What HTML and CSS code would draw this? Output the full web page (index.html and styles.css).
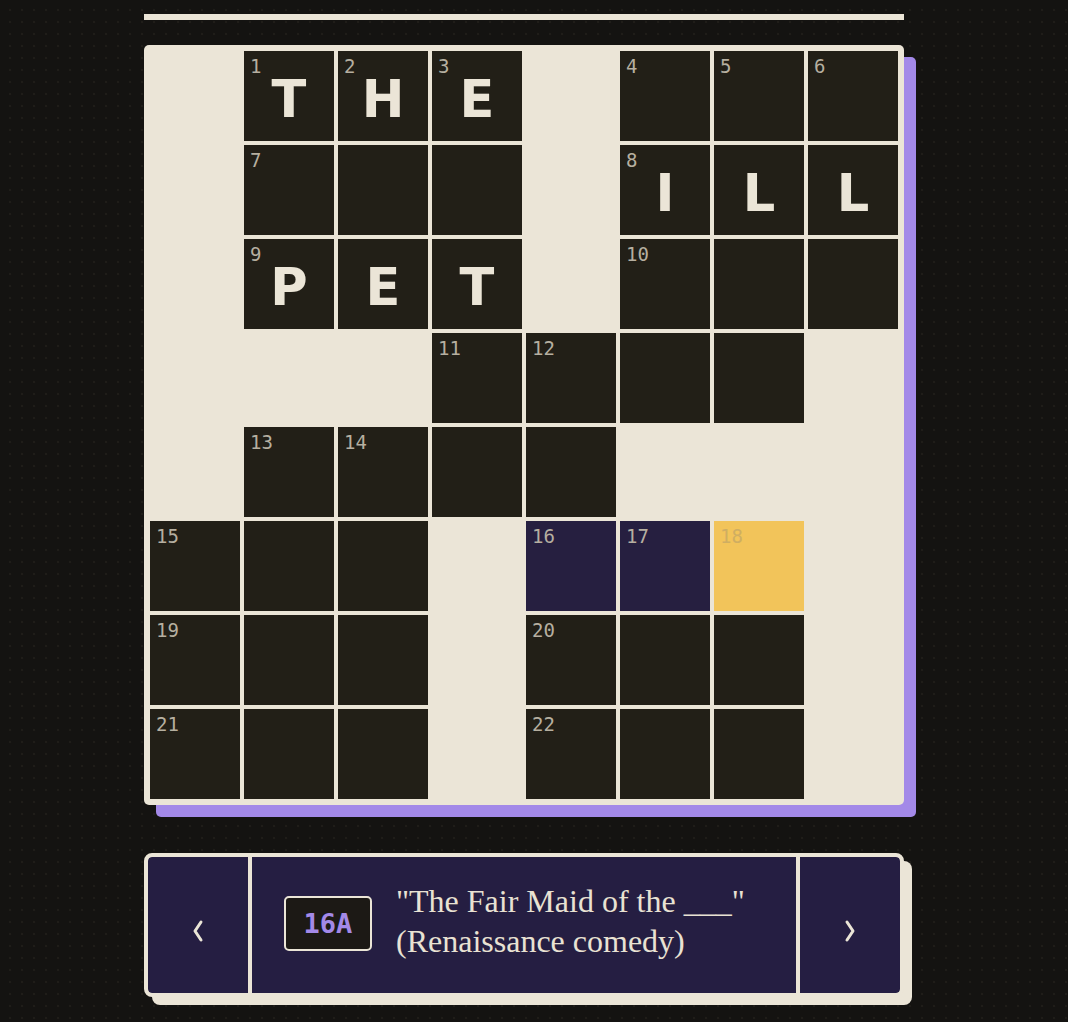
FILE: index.html
```html
<!DOCTYPE html>
<html lang="en">
<head>
<meta charset="utf-8">
<title>Crossword</title>
<link rel="stylesheet" href="styles.css">
</head>
<body>
<main class="page">
  <div class="rule"></div>

  <section class="board">
    <!-- row 0 -->
    <div class="sq empty"></div>
    <div class="sq"><span class="num">1</span><span class="ltr">T</span></div>
    <div class="sq"><span class="num">2</span><span class="ltr">H</span></div>
    <div class="sq"><span class="num">3</span><span class="ltr">E</span></div>
    <div class="sq empty"></div>
    <div class="sq"><span class="num">4</span></div>
    <div class="sq"><span class="num">5</span></div>
    <div class="sq"><span class="num">6</span></div>
    <!-- row 1 -->
    <div class="sq empty"></div>
    <div class="sq"><span class="num">7</span></div>
    <div class="sq"></div>
    <div class="sq"></div>
    <div class="sq empty"></div>
    <div class="sq"><span class="num">8</span><span class="ltr">I</span></div>
    <div class="sq"><span class="ltr">L</span></div>
    <div class="sq"><span class="ltr">L</span></div>
    <!-- row 2 -->
    <div class="sq empty"></div>
    <div class="sq"><span class="num">9</span><span class="ltr">P</span></div>
    <div class="sq"><span class="ltr">E</span></div>
    <div class="sq"><span class="ltr">T</span></div>
    <div class="sq empty"></div>
    <div class="sq"><span class="num">10</span></div>
    <div class="sq"></div>
    <div class="sq"></div>
    <!-- row 3 -->
    <div class="sq empty"></div>
    <div class="sq empty"></div>
    <div class="sq empty"></div>
    <div class="sq"><span class="num">11</span></div>
    <div class="sq"><span class="num">12</span></div>
    <div class="sq"></div>
    <div class="sq"></div>
    <div class="sq empty"></div>
    <!-- row 4 -->
    <div class="sq empty"></div>
    <div class="sq"><span class="num">13</span></div>
    <div class="sq"><span class="num">14</span></div>
    <div class="sq"></div>
    <div class="sq"></div>
    <div class="sq empty"></div>
    <div class="sq empty"></div>
    <div class="sq empty"></div>
    <!-- row 5 -->
    <div class="sq"><span class="num">15</span></div>
    <div class="sq"></div>
    <div class="sq"></div>
    <div class="sq empty"></div>
    <div class="sq word"><span class="num">16</span></div>
    <div class="sq word"><span class="num">17</span></div>
    <div class="sq active"><span class="num">18</span></div>
    <div class="sq empty"></div>
    <!-- row 6 -->
    <div class="sq"><span class="num">19</span></div>
    <div class="sq"></div>
    <div class="sq"></div>
    <div class="sq empty"></div>
    <div class="sq"><span class="num">20</span></div>
    <div class="sq"></div>
    <div class="sq"></div>
    <div class="sq empty"></div>
    <!-- row 7 -->
    <div class="sq"><span class="num">21</span></div>
    <div class="sq"></div>
    <div class="sq"></div>
    <div class="sq empty"></div>
    <div class="sq"><span class="num">22</span></div>
    <div class="sq"></div>
    <div class="sq"></div>
    <div class="sq empty"></div>
  </section>

  <section class="cluebar">
    <button class="nav" aria-label="Previous clue">
      <svg width="14" height="24" viewBox="0 0 14 24"><path d="M10 3 L4 12 L10 21" fill="none" stroke="#ebe5d7" stroke-width="3" stroke-linecap="round" stroke-linejoin="round"/></svg>
    </button>
    <div class="clue">
      <span class="badge">16A</span>
      <p class="clue-text">"The Fair Maid of the ___"<br>(Renaissance comedy)</p>
    </div>
    <button class="nav" aria-label="Next clue">
      <svg width="14" height="24" viewBox="0 0 14 24"><path d="M4 3 L10 12 L4 21" fill="none" stroke="#ebe5d7" stroke-width="3" stroke-linecap="round" stroke-linejoin="round"/></svg>
    </button>
  </section>
</main>
</body>
</html>
```

FILE: styles.css
```css
html, body {
  margin: 0;
  padding: 0;
}

body {
  background-color: #141311;
  background-image: radial-gradient(circle, #1f1d19 1.2px, transparent 1.6px);
  background-size: 12px 12px;
  background-position: 4px 4px;
  min-height: 1022px;
  font-family: "Inter", "DejaVu Sans", sans-serif;
}

.page {
  width: 760px;
  padding: 14px 0 0 144px;
  display: flex;
  flex-direction: column;
}

.rule {
  height: 6px;
  background: #ebe5d7;
}

.board {
  margin-top: 25px;
  display: grid;
  grid-template-columns: repeat(8, 90px);
  grid-auto-rows: 90px;
  gap: 4px;
  padding: 6px;
  background: #ebe5d7;
  border-radius: 5px;
  box-shadow: 12px 12px 0 #a389e8;
}

.sq {
  position: relative;
  background: #221f17;
  display: flex;
  align-items: center;
  justify-content: center;
}

.sq.empty {
  background: transparent;
}

.sq.word {
  background: #261f40;
}

.sq.active {
  background: #f2c45a;
}

.num {
  position: absolute;
  top: 4px;
  left: 6px;
  font-family: "DejaVu Sans Mono", monospace;
  font-size: 19px;
  line-height: 22px;
  color: #b6afa0;
}

.active .num {
  color: #cfae62;
}

.ltr {
  font-family: "DejaVu Sans", sans-serif;
  font-weight: 700;
  font-size: 51px;
  line-height: 1;
  color: #ebe5d7;
  padding-top: 6px;
}

.cluebar {
  margin-top: 48px;
  display: grid;
  grid-template-columns: 100px 1fr 100px;
  gap: 4px;
  height: 136px;
  border: 4px solid #ebe5d7;
  background: #ebe5d7;
  border-radius: 8px;
  box-shadow: 8px 8px 0 #ebe5d7;
  overflow: hidden;
}

.nav {
  margin: 0;
  padding: 12px 0 0;
  border: 0;
  background: #251e42;
  display: flex;
  align-items: center;
  justify-content: center;
  cursor: pointer;
}

.nav:first-child {
  border-radius: 4px 0 0 4px;
}

.nav:last-child {
  border-radius: 0 4px 4px 0;
}

.clue {
  background: #251e42;
  display: flex;
  align-items: center;
  gap: 24px;
  padding-left: 32px;
}

.badge {
  width: 84px;
  height: 51px;
  border: 2px solid #ebe5d7;
  border-radius: 5px;
  background: #1c1915;
  color: #a389e8;
  font-family: "DejaVu Sans Mono", monospace;
  font-weight: 700;
  font-size: 27px;
  display: flex;
  align-items: center;
  justify-content: center;
  flex-shrink: 0;
  margin-bottom: 4px;
}

.clue-text {
  margin: 0;
  font-family: "Liberation Serif", "Times New Roman", serif;
  font-size: 32px;
  line-height: 40px;
  color: #e9e2d3;
  padding-bottom: 8px;
}
```
